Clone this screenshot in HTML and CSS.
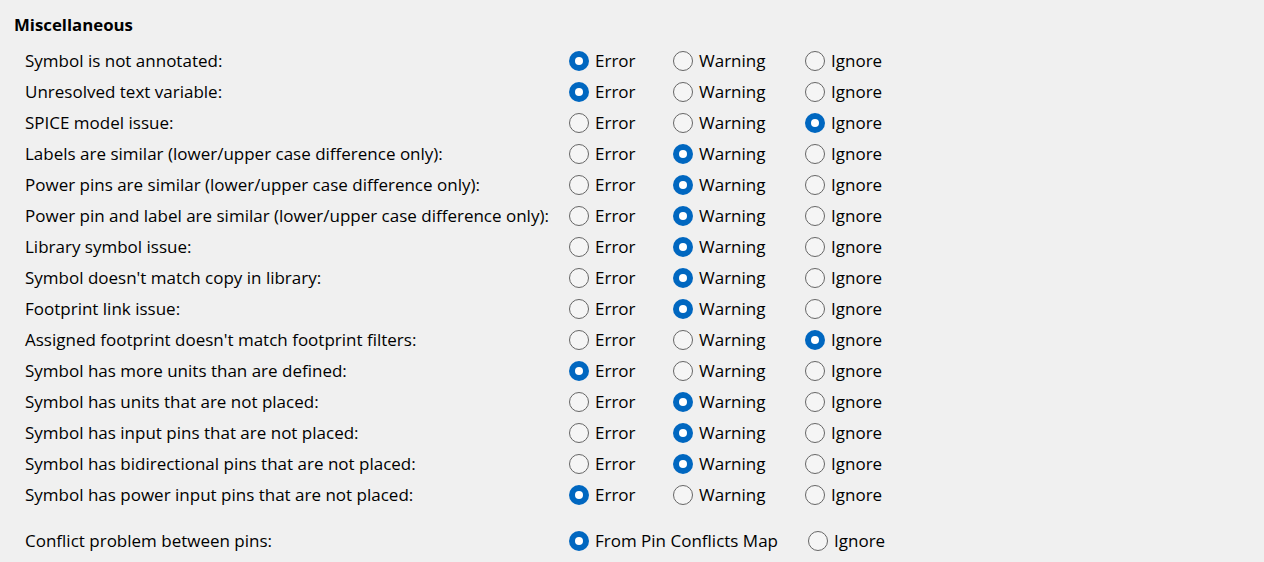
FILE: index.html
```html
<!DOCTYPE html>
<html>
<head>
<meta charset="utf-8">
<link rel="stylesheet" href="styles.css">
</head>
<body>
<div class="panel">
  <div class="heading">Miscellaneous</div>
  <div class="grid">
    <div class="label">Symbol is not annotated:</div>
    <div class="opt"><span class="radio on"></span>Error</div>
    <div class="opt"><span class="radio"></span>Warning</div>
    <div class="opt"><span class="radio"></span>Ignore</div>

    <div class="label">Unresolved text variable:</div>
    <div class="opt"><span class="radio on"></span>Error</div>
    <div class="opt"><span class="radio"></span>Warning</div>
    <div class="opt"><span class="radio"></span>Ignore</div>

    <div class="label">SPICE model issue:</div>
    <div class="opt"><span class="radio"></span>Error</div>
    <div class="opt"><span class="radio"></span>Warning</div>
    <div class="opt"><span class="radio on"></span>Ignore</div>

    <div class="label">Labels are similar (lower/upper case difference only):</div>
    <div class="opt"><span class="radio"></span>Error</div>
    <div class="opt"><span class="radio on"></span>Warning</div>
    <div class="opt"><span class="radio"></span>Ignore</div>

    <div class="label">Power pins are similar (lower/upper case difference only):</div>
    <div class="opt"><span class="radio"></span>Error</div>
    <div class="opt"><span class="radio on"></span>Warning</div>
    <div class="opt"><span class="radio"></span>Ignore</div>

    <div class="label">Power pin and label are similar (lower/upper case difference only):</div>
    <div class="opt"><span class="radio"></span>Error</div>
    <div class="opt"><span class="radio on"></span>Warning</div>
    <div class="opt"><span class="radio"></span>Ignore</div>

    <div class="label">Library symbol issue:</div>
    <div class="opt"><span class="radio"></span>Error</div>
    <div class="opt"><span class="radio on"></span>Warning</div>
    <div class="opt"><span class="radio"></span>Ignore</div>

    <div class="label">Symbol doesn't match copy in library:</div>
    <div class="opt"><span class="radio"></span>Error</div>
    <div class="opt"><span class="radio on"></span>Warning</div>
    <div class="opt"><span class="radio"></span>Ignore</div>

    <div class="label">Footprint link issue:</div>
    <div class="opt"><span class="radio"></span>Error</div>
    <div class="opt"><span class="radio on"></span>Warning</div>
    <div class="opt"><span class="radio"></span>Ignore</div>

    <div class="label">Assigned footprint doesn't match footprint filters:</div>
    <div class="opt"><span class="radio"></span>Error</div>
    <div class="opt"><span class="radio"></span>Warning</div>
    <div class="opt"><span class="radio on"></span>Ignore</div>

    <div class="label">Symbol has more units than are defined:</div>
    <div class="opt"><span class="radio on"></span>Error</div>
    <div class="opt"><span class="radio"></span>Warning</div>
    <div class="opt"><span class="radio"></span>Ignore</div>

    <div class="label">Symbol has units that are not placed:</div>
    <div class="opt"><span class="radio"></span>Error</div>
    <div class="opt"><span class="radio on"></span>Warning</div>
    <div class="opt"><span class="radio"></span>Ignore</div>

    <div class="label">Symbol has input pins that are not placed:</div>
    <div class="opt"><span class="radio"></span>Error</div>
    <div class="opt"><span class="radio on"></span>Warning</div>
    <div class="opt"><span class="radio"></span>Ignore</div>

    <div class="label">Symbol has bidirectional pins that are not placed:</div>
    <div class="opt"><span class="radio"></span>Error</div>
    <div class="opt"><span class="radio on"></span>Warning</div>
    <div class="opt"><span class="radio"></span>Ignore</div>

    <div class="label">Symbol has power input pins that are not placed:</div>
    <div class="opt"><span class="radio on"></span>Error</div>
    <div class="opt"><span class="radio"></span>Warning</div>
    <div class="opt"><span class="radio"></span>Ignore</div>
  </div>
  <div class="conflict">
    <div class="label">Conflict problem between pins:</div>
    <div class="opt wide"><span class="radio on"></span>From Pin Conflicts Map</div>
    <div class="opt"><span class="radio"></span>Ignore</div>
  </div>
</div>
</body>
</html>
```

FILE: styles.css
```css
html, body {
  margin: 0;
  padding: 0;
  background: #f0f0f0;
}
body {
  font-family: "Open Sans", "Noto Sans", sans-serif;
  font-size: 17px;
  color: #000;
  width: 1264px;
  height: 562px;
  overflow: hidden;
}
.panel {
  padding: 13px 0 0 14px;
}
.heading {
  font-weight: bold;
  line-height: 24px;
  height: 24px;
  font-size: 16.8px;
}
.grid {
  display: grid;
  grid-template-columns: 544px 104px 132px auto;
  grid-auto-rows: 31px;
  margin-top: 8px;
  padding-left: 11px;
}
.label, .opt {
  display: flex;
  align-items: center;
  white-space: nowrap;
}
.radio {
  box-sizing: border-box;
  width: 20px;
  height: 20px;
  border-radius: 50%;
  border: 1px solid #666;
  background: #f5f5f5;
  margin-right: 6px;
  flex: none;
  position: relative;
}
.radio.on {
  border: none;
  background: #0067c0;
}
.radio.on::after {
  content: "";
  position: absolute;
  left: 6px;
  top: 6px;
  width: 8px;
  height: 8px;
  border-radius: 50%;
  background: #fff;
}
.conflict {
  display: grid;
  grid-template-columns: 544px 239px auto;
  grid-auto-rows: 31px;
  margin-top: 15px;
  padding-left: 11px;
}
```
